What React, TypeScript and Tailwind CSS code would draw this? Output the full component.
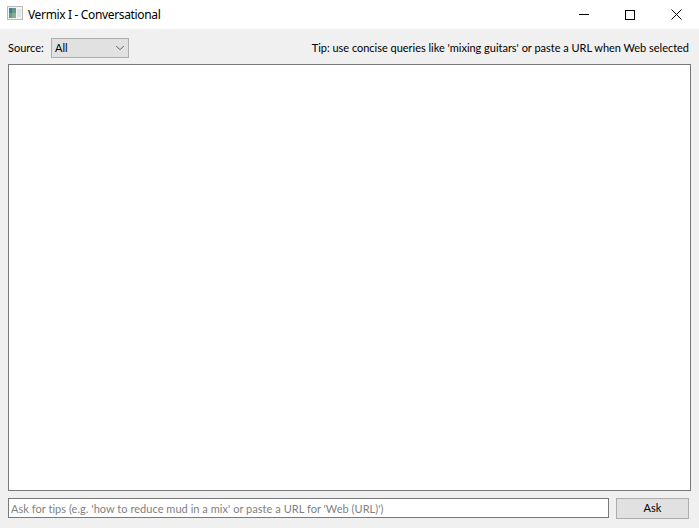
import { ChevronDown } from "lucide-react";

function WindowIcon() {
  return (
    <svg width="16" height="14" viewBox="0 0 16 14" className="shrink-0 mb-[3px]">
      <rect x="0" y="0" width="16" height="14" fill="#b9b9b9" />
      <rect x="1" y="1" width="14" height="12" fill="#f4f4f4" />
      <rect x="2" y="2" width="7" height="10" fill="#5f9a8c" />
      <rect x="2" y="2" width="3" height="5" fill="#3f7f8f" />
      <rect x="5" y="7" width="4" height="5" fill="#86b08a" />
      <rect x="10" y="3" width="4" height="8" fill="#dfe6e4" />
    </svg>
  );
}

export default function App() {
  return (
    <div className="w-[699px] h-[528px] flex flex-col bg-[#f0f0f0] text-[11px] text-black overflow-hidden font-['Lato','Noto_Sans',sans-serif]">
      <div className="h-[29px] bg-white flex items-center justify-between">
        <div className="flex items-center gap-[5px] pl-[7px]">
          <WindowIcon />
          <span className="leading-none text-[12px] font-['Noto_Sans',sans-serif] tracking-[-0.35px]">Vermix I - Conversational</span>
        </div>
        <div className="flex items-center">
          <div className="w-[46px] h-[29px] flex items-center justify-center">
            <div className="w-[10px] h-px bg-black" />
          </div>
          <div className="w-[46px] h-[29px] flex items-center justify-center">
            <div className="w-[10px] h-[10px] border border-black" />
          </div>
          <div className="w-[46px] h-[29px] flex items-center justify-center">
            <svg width="11" height="11" viewBox="0 0 11 11" stroke="black" strokeWidth="1">
              <path d="M0.5 0.5 L10.5 10.5 M10.5 0.5 L0.5 10.5" />
            </svg>
          </div>
        </div>
      </div>

      <div className="flex-1 flex flex-col px-[8px] pt-[9px] pb-[9px]">
        <div className="h-[20px] flex items-center justify-between">
          <div className="flex items-center">
            <span className="w-[43px]">Source:</span>
            <div className="w-[78px] h-[20px] bg-[#e1e1e1] border border-[#adadad] flex items-center justify-between pl-[3px] pr-[1px]">
              <span>All</span>
              <ChevronDown size={14} strokeWidth={1} />
            </div>
          </div>
          <span className="pr-[2px] tracking-[-0.02px]">Tip: use concise queries like 'mixing guitars' or paste a URL when Web selected</span>
        </div>

        <div className="h-[427px] mt-[6px] bg-white border border-[#7a7a7a]" />

        <div className="flex gap-[7px] mt-[7px]">
          <input
            placeholder="Ask for tips (e.g. 'how to reduce mud in a mix' or paste a URL for 'Web (URL)')"
            className="w-[601px] h-[20px] bg-white border border-[#7a7a7a] px-[2px] outline-none tracking-[0.04px] placeholder:text-[#7f7f7f]"
          />
          <button className="w-[73px] h-[21px] bg-[#e1e1e1] border border-[#adadad]">Ask</button>
        </div>
      </div>
    </div>
  );
}
